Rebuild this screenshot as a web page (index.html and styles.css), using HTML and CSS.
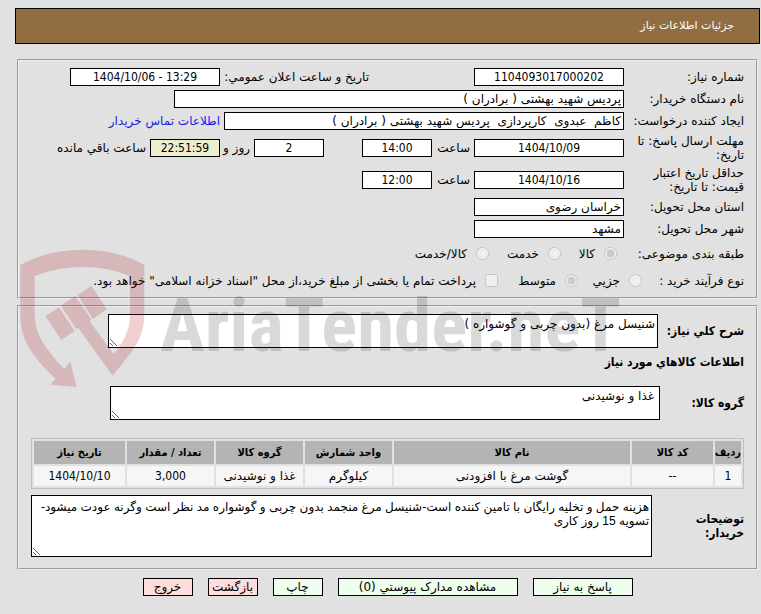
FILE: index.html
```html
<!DOCTYPE html>
<html lang="fa" dir="rtl">
<head>
    <meta charset="utf-8">
    <title>جزئیات اطلاعات نیاز</title>
    <link rel="stylesheet" href="styles.css">
</head>
<body>
<div class="container">
    <h1 class="page-title">جزئیات اطلاعات نیاز</h1>

    <fieldset class="panel need-info">
        <div class="row">
            <label class="label" for="needNumber">شماره نیاز:</label>
            <input type="text" class="field number date" id="needNumber" value="1104093017000202" readonly>
            <label class="label-announce" for="announceDate">تاریخ و ساعت اعلان عمومي:</label>
            <input type="text" class="field number date" id="announceDate" dir="ltr" value="1404/10/06 - 13:29" readonly>
        </div>
        <div class="row">
            <label class="label" for="buyer">نام دستگاه خریدار:</label>
            <input type="text" class="field buyer" id="buyer" value="پردیس شهید بهشتی ( برادران )" readonly>
        </div>
        <div class="row">
            <label class="label" for="creator">ایجاد کننده درخواست:</label>
            <input type="text" class="field creator" id="creator" value="کاظم  عبدوی  کارپردازی  پردیس شهید بهشتی ( برادران )" readonly>
            <a class="contact" href="#">اطلاعات تماس خریدار</a>
        </div>
        <div class="row tall">
            <label class="label" for="replyDate">مهلت ارسال پاسخ: تا تاریخ:</label>
            <input type="text" class="field number date" id="replyDate" value="1404/10/09" readonly>
            <label class="label-time" for="replyTime">ساعت</label>
            <input type="text" class="field number time" id="replyTime" value="14:00" readonly>
            <input type="text" class="field number time days" id="daysLeft" value="2" readonly>
            <label class="label-days" for="daysLeft">روز و</label>
            <input type="text" class="field number time remain" id="timeLeft" value="22:51:59" readonly>
            <label class="label-remain" for="timeLeft">ساعت باقي مانده</label>
        </div>
        <div class="row tall">
            <label class="label" for="priceDate">حداقل تاریخ اعتبار<br>قیمت: تا تاریخ:</label>
            <input type="text" class="field number date" id="priceDate" value="1404/10/16" readonly>
            <label class="label-time" for="priceTime">ساعت</label>
            <input type="text" class="field number time" id="priceTime" value="12:00" readonly>
        </div>
        <div class="row">
            <label class="label" for="province">استان محل تحویل:</label>
            <input type="text" class="field date" id="province" value="خراسان رضوی" readonly>
        </div>
        <div class="row">
            <label class="label" for="city">شهر محل تحویل:</label>
            <input type="text" class="field date" id="city" value="مشهد" readonly>
        </div>
        <div class="row options">
            <span class="label subject">طبقه بندی موضوعی:</span>
            <label class="option goods"><input type="radio" name="subject" checked disabled>کالا</label>
            <label class="option service"><input type="radio" name="subject" disabled>خدمت</label>
            <label class="option"><input type="radio" name="subject" disabled>کالا/خدمت</label>
        </div>
        <div class="row options">
            <span class="label process">نوع فرآیند خرید :</span>
            <label class="option small"><input type="radio" name="process" disabled>جزيي</label>
            <label class="option medium"><input type="radio" name="process" checked disabled>متوسط</label>
            <label class="option"><input type="checkbox" disabled>پرداخت تمام یا بخشی از مبلغ خرید،از محل "اسناد خزانه اسلامی" خواهد بود.</label>
        </div>
    </fieldset>

    <fieldset class="panel need-desc">
        <div class="row">
            <label class="label-bold summary" for="summary">شرح کلي نیاز:</label>
            <textarea class="area" id="summary" rows="2" readonly>شنیسل مرغ (بدون چربی و گوشواره )</textarea>
        </div>
        <h2 class="section-title">اطلاعات کالاهاي مورد نیاز</h2>
        <div class="row">
            <label class="label-bold group" for="group">گروه کالا:</label>
            <textarea class="area group-area" id="group" rows="2" readonly>غذا و نوشیدنی</textarea>
        </div>
        <table class="goods-table">
            <colgroup>
                <col class="col-row">
                <col class="col-code">
                <col>
                <col class="col-unit">
                <col class="col-unit">
                <col class="col-unit">
                <col class="col-date">
            </colgroup>
            <tr>
                <th>ردیف</th>
                <th>کد کالا</th>
                <th>نام کالا</th>
                <th>واحد شمارش</th>
                <th>گروه کالا</th>
                <th>تعداد / مقدار</th>
                <th>تاریخ نیاز</th>
            </tr>
            <tr>
                <td class="number">1</td>
                <td class="number">--</td>
                <td>گوشت مرغ با افزودنی</td>
                <td>کیلوگرم</td>
                <td>غذا و نوشیدنی</td>
                <td class="number">3,000</td>
                <td class="number">1404/10/10</td>
            </tr>
        </table>
        <div class="row">
            <label class="label-bold notes" for="notes">توضیحات<br>خریدار:</label>
            <textarea class="area notes-area" id="notes" rows="4" readonly>هزینه حمل و تخلیه رایگان با تامین کننده است-شنیسل مرغ منجمد بدون چربی و گوشواره مد نظر است وگرنه عودت میشود-تسویه 15 روز کاری</textarea>
        </div>
    </fieldset>

    <div class="buttons">
        <button type="button" class="btn reply">پاسخ به نیاز</button>
        <button type="button" class="btn docs">مشاهده مدارک پیوستي (0)</button>
        <button type="button" class="btn">چاپ</button>
        <button type="button" class="btn back">بازگشت</button>
        <button type="button" class="btn back">خروج</button>
    </div>

    <div class="watermark" dir="ltr">
        <svg class="watermark-logo" viewBox="0 0 420 435" aria-hidden="true">
            <path d="M16 60 Q100 14 203 14 Q306 14 388 60 L388 210 Q388 270 350 320 L293 392 L190 249 L184 253 L138 182 L180 152 L228 222 L225 230 L296 327 Q345 270 345 210 L345 93 Q280 66 203 66 Q126 66 59 93 L59 205 Q59 255 82 290 Q110 333 148 372 L166 350 L185 426 L107 419 L122 401 Q70 355 40 305 Q16 265 16 210 Z"/>
            <path d="M91 213 L132 187 L179 258 L139 285 Z"/>
            <path d="M188 150 L229 122 L275 193 L233 222 Z"/>
        </svg>
        <span class="watermark-text">AriaTender.neT</span>
    </div>
</div>
</body>
</html>
```
FILE: styles.css
```css
* {
    box-sizing: border-box;
}
body {
    margin: 0;
    background-color: #e1e1e1;
    font-family: "DejaVu Sans", sans-serif;
    font-size: 12px;
    line-height: 14px;
    color: #000;
}
.container {
    position: relative;
    padding: 8px 1px 0 15px;
}
.page-title {
    margin: 0 0 15px;
    padding: 10px 25px;
    border: 1px solid #000;
    background-color: #906e41;
    color: #fff;
    font-size: 11px;
    font-weight: normal;
    line-height: 14px;
}
.panel {
    min-width: 0;
    margin: 0 2px 6px;
    border: 2px groove threedface;
}
.need-info {
    padding: 5px 12px 3px;
}
.need-desc {
    padding: 7px 12px 11px;
    margin-bottom: 8px;
}
.row {
    display: flex;
    align-items: center;
    min-height: 22px;
}
.tall {
    min-height: 32px;
}
.options {
    min-height: 27px;
}

/* text boxes */
.label {
    flex: 0 0 120px;
}
.field {
    height: 18px;
    padding: 1px 2px;
    border: 1px solid #000;
    border-radius: 0;
    background-color: #fff;
    font-family: inherit;
    font-size: 12px;
    color: #000;
}
.number {
    font-family: "DejaVu Sans Condensed", "DejaVu Sans", sans-serif;
    text-align: center;
}
.date {
    width: 150px;
}
.time {
    width: 70px;
}
.buyer {
    width: 450px;
}
.creator {
    width: 400px;
}
.days {
    margin-right: 38px;
}
.remain {
    background-color: #eeeecc;
}
.label-announce {
    width: 149px;
    margin-right: 105px;
    white-space: nowrap;
}
.label-time {
    width: 42px;
    padding-right: 4px;
}
.label-days {
    width: 34px;
    padding-right: 4px;
}
.label-remain {
    padding-right: 4px;
}
.contact {
    padding-right: 4px;
    color: #1a1aee;
    text-decoration: none;
}

/* radio and checkbox options */
.option {
    display: flex;
    align-items: center;
    gap: 9px;
    white-space: nowrap;
}
.option input {
    flex: none;
    width: 13px;
    height: 13px;
    margin: 0;
}
.subject {
    flex-basis: 127px;
}
.process {
    flex-basis: 102px;
}
.goods {
    width: 56px;
}
.service {
    width: 72px;
}
.small {
    width: 64px;
}
.medium {
    width: 80px;
}

/* goods description */
.label-bold, .section-title, .goods-table th {
    font-family: "DejaVu Sans Condensed", "DejaVu Sans", sans-serif;
    font-weight: bold;
}
.label-bold {
    flex: none;
}
.summary {
    width: 86px;
}
.group {
    width: 84px;
}
.notes {
    width: 92px;
}
.area {
    flex: 0 1 550px;
    min-width: 0;
    height: 34px;
    padding: 2px;
    border: 1px solid #000;
    background-color: #fff;
    font-family: inherit;
    font-size: 12px;
    line-height: 14px;
    color: #000;
}
.group-area {
    padding: 2px 5px;
}
.notes-area {
    flex: 1;
    height: 62px;
    padding: 4px 2px;
    font-family: "Liberation Sans", "DejaVu Sans", sans-serif;
}
.section-title {
    margin: 7px 0 17px;
    font-size: 12px;
    line-height: 14px;
}
.goods-table {
    width: 100%;
    margin: 18px 0 6px;
    border: 1px solid #c0c0c0;
    border-spacing: 2px;
    table-layout: fixed;
    text-align: center;
}
.goods-table th {
    height: 23px;
    padding: 0;
    background-color: #b4b4b4;
    font-size: 11px;
}
.goods-table td {
    height: 20px;
    padding: 0;
    background-color: #f6f6f6;
}
.col-row {
    width: 26px;
}
.col-code {
    width: 81px;
}
.col-unit {
    width: 87px;
}
.col-date {
    width: 91px;
}

.buttons {
    display: flex;
    justify-content: center;
    gap: 15px;
}
.btn {
    width: 50px;
    height: 18px;
    padding: 0;
    border: 1px solid #000;
    border-radius: 0;
    background-color: #eeffee;
    font-family: inherit;
    font-size: 12px;
    line-height: 14px;
    color: #000;
    white-space: nowrap;
}
.reply {
    width: 100px;
}
.docs {
    width: 180px;
}
.back {
    background-color: #ffdddd;
}

/* watermark lies over both panels */
.watermark {
    position: absolute;
    top: 245px;
    left: 15px;
    display: flex;
    gap: 5px;
    pointer-events: none;
}
.watermark-logo {
    width: 140px;
    height: 145px;
    fill: rgba(170, 20, 30, 0.2);
}
.watermark-text {
    padding-top: 40px;
    font-family: "Roboto Condensed", Roboto, sans-serif;
    font-size: 75px;
    font-weight: bold;
    line-height: 80px;
    color: rgba(0, 0, 0, 0.15);
}
```
